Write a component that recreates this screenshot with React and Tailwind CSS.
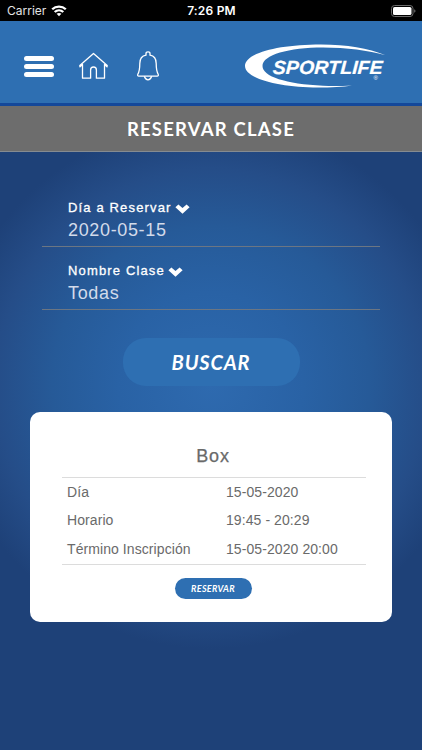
const classes = [
  {
    name: "Box",
    rows: [
      { label: "Día", value: "15-05-2020" },
      { label: "Horario", value: "19:45 - 20:29" },
      { label: "Término Inscripción", value: "15-05-2020 20:00" },
    ],
  },
];

const StatusBar = () => (
  <div className="grid h-[21px] grid-cols-3 items-center bg-black pl-[7px] pr-[6px] text-[12px] leading-none text-[#e4e4e4] font-['Inter',sans-serif]">
    <div className="flex items-center gap-[5px]">
      <span>Carrier</span>
      <svg width="16" height="12" viewBox="0 0 16 12" fill="none" stroke="#fff" strokeWidth="2.300">
        <path d="M1.2 4.3C5 .6 11 .6 14.8 4.3" />
        <path d="M3.7 7C6.2 4.7 9.8 4.7 12.3 7" />
        <path d="M8 11.3L5.6 8.8C7 7.6 9 7.6 10.4 8.8Z" fill="#fff" stroke="none" />
      </svg>
    </div>
    <span className="text-center font-semibold tracking-[0.2px] text-white">7:26 PM</span>
    <svg className="justify-self-end" width="25" height="12" viewBox="0 0 25 12">
      <rect x=".5" y=".5" width="21.5" height="11" rx="3" fill="none" stroke="#6b6b6b" />
      <rect x="2" y="2" width="18.5" height="8" rx="1.6" fill="#fff" />
      <path d="M23.2 4.2q1.3.5 1.3 1.8t-1.3 1.8z" fill="#6b6b6b" />
    </svg>
  </div>
);

const Logo = () => (
  <svg width="144" height="46" viewBox="0 0 144 46" fill="#fff">
    <path d="M141.500 12.200C124 5 103 1.400 77 1.400C34 1.400 1 10 1 23C1 35.500 35 44.500 74 44.500C87 44.500 99 43.700 108 42.400C98 43 88 43.200 79 42.700C42 41 18.500 33.500 18.500 23C18.500 12 45 4.600 79 4.600C103 4.600 124 7.500 141.500 12.200Z" />
    <text
      transform="translate(28.500 30.500) skewX(-3)"
      fontFamily="Liberation Sans, sans-serif"
      fontSize="19"
      fontWeight="700"
      fontStyle="italic"
      stroke="#fff"
      strokeWidth=".2"
      textLength="110"
      lengthAdjust="spacingAndGlyphs"
    >
      SPORTLIFE
    </text>
    <text x="129.500" y="36.500" fontFamily="Liberation Sans, sans-serif" fontSize="6">
      ®
    </text>
  </svg>
);

const Header = () => (
  <header className="flex h-[85px] items-center border-b-[3px] border-[#14489a] bg-[#2e6fb2] pl-6">
    <button className="mt-2 flex w-[30px] flex-col gap-[3px]">
      <span className="h-[5px] rounded-full bg-white" />
      <span className="h-[5px] rounded-full bg-white" />
      <span className="h-[5px] rounded-full bg-white" />
    </button>
    <svg
      className="mt-2 ml-[25px]"
      width="29"
      height="28"
      viewBox="0 0 29 28"
      fill="none"
      stroke="#fff"
      strokeWidth="1.300"
      strokeLinejoin="round"
      strokeLinecap="round"
    >
      <path d="M3.500 12.500L1 14.800L.8 13.600L14.500 1.500L28.200 13.600L28 14.800L25.500 12.500V26.200H17.400V18Q17.400 15 14.500 15T11.600 18V26.200H3.500Z" />
    </svg>
    <svg
      className="mt-2 ml-[28px]"
      width="24"
      height="30"
      viewBox="0 0 24 30"
      fill="none"
      stroke="#fff"
      strokeWidth="1.300"
      strokeLinejoin="round"
    >
      <path d="M10 4.200V2.500Q10 .8 12 .8T14 2.500V4.200C18.500 5 20.200 8.500 20.200 12.500C20.200 18 20.500 20.500 22.300 23.500Q22.500 25.200 21.300 25.200H2.700Q1.500 25.200 1.700 23.500C3.500 20.500 3.800 18 3.800 12.500C3.800 8.500 5.500 5 10 4.200Z" />
      <path d="M8.300 25.200Q9.500 28.800 12 28.800T15.700 25.200" />
    </svg>
    <div className="mt-2 ml-auto pr-[34px]">
      <Logo />
    </div>
  </header>
);

const Field = ({ label, value }) => (
  <div className="flex h-[63px] flex-col justify-end border-b border-[#6c7683] pb-[5px] pl-[26px] font-['Liberation_Sans',sans-serif]">
    <div className="flex items-center gap-[3.5px]">
      <span className="text-[13px] leading-[22px] tracking-[1.15px] text-white [-webkit-text-stroke:0.3px_#fff]">
        {label}
      </span>
      <svg className="mt-[2px]" width="15" height="10" viewBox="0 0 15 10">
        <path d="M3.400 .5L7.500 4L11.600 .5L14.600 3.200L7.500 9.700L.4 3.200Z" fill="#fff" />
      </svg>
    </div>
    <span className="text-[18px] leading-[22px] tracking-[0.65px] text-[#d3dbea]">{value}</span>
  </div>
);

const ClassCard = ({ item }) => (
  <section className="mx-[30px] mt-[26px] flex h-[210px] flex-col items-center rounded-[10px] bg-white px-8 pt-[32px] text-[#6a6a6a] font-['Liberation_Sans',sans-serif]">
    <h2 className="h-[33px] pl-1 text-[18px] leading-[24px] tracking-[0.8px] [-webkit-text-stroke:0.25px_#6a6a6a]">
      {item.name}
    </h2>
    <dl className="h-[88px] w-[304px] self-start border-y border-[#dcdcdc] text-[14px] tracking-[0.08px]">
      {item.rows.map((row) => (
        <div key={row.label} className="grid h-[28.5px] grid-cols-[159px_1fr] items-center pl-[5px]">
          <dt>{row.label}</dt>
          <dd>{row.value}</dd>
        </div>
      ))}
    </dl>
    <button className="mt-[13px] ml-1 h-[21px] w-[77px] rounded-full bg-[#2e6fb2] text-[9px] font-bold italic tracking-[0.3px] text-white font-['Lato',sans-serif]">
      RESERVAR
    </button>
  </section>
);

const App = () => {
  return (
    <div className="flex h-[750px] w-[422px] flex-col overflow-hidden bg-[#1e4178]">
      <StatusBar />
      <Header />
      <h1 className="flex h-[46px] items-center justify-center border-b border-[#858b91] bg-[#6d6d6d] pt-[3px] text-[18.5px] font-bold tracking-[1.2px] text-white font-['Lato',sans-serif]">
        RESERVAR CLASE
      </h1>
      <main className="flex-1 bg-[radial-gradient(circle_264px_at_211px_233px,#2e6aaf_0%,#2962a5_35%,#265a98_60%,#254d88_82%,#1e4178_100%)]">
        <div className="mx-[42px] pt-8">
          <Field label="Día a Reservar" value="2020-05-15" />
          <Field label="Nombre Clase" value="Todas" />
        </div>
        <button className="mx-auto mt-[28px] block h-[48px] w-[177px] rounded-[23px] bg-[#2e6fb2] text-[20px] font-bold italic tracking-[0.85px] text-white font-['Lato',sans-serif]">
          BUSCAR
        </button>
        {classes.map((item) => (
          <ClassCard key={item.name} item={item} />
        ))}
      </main>
    </div>
  );
};

export default App;
